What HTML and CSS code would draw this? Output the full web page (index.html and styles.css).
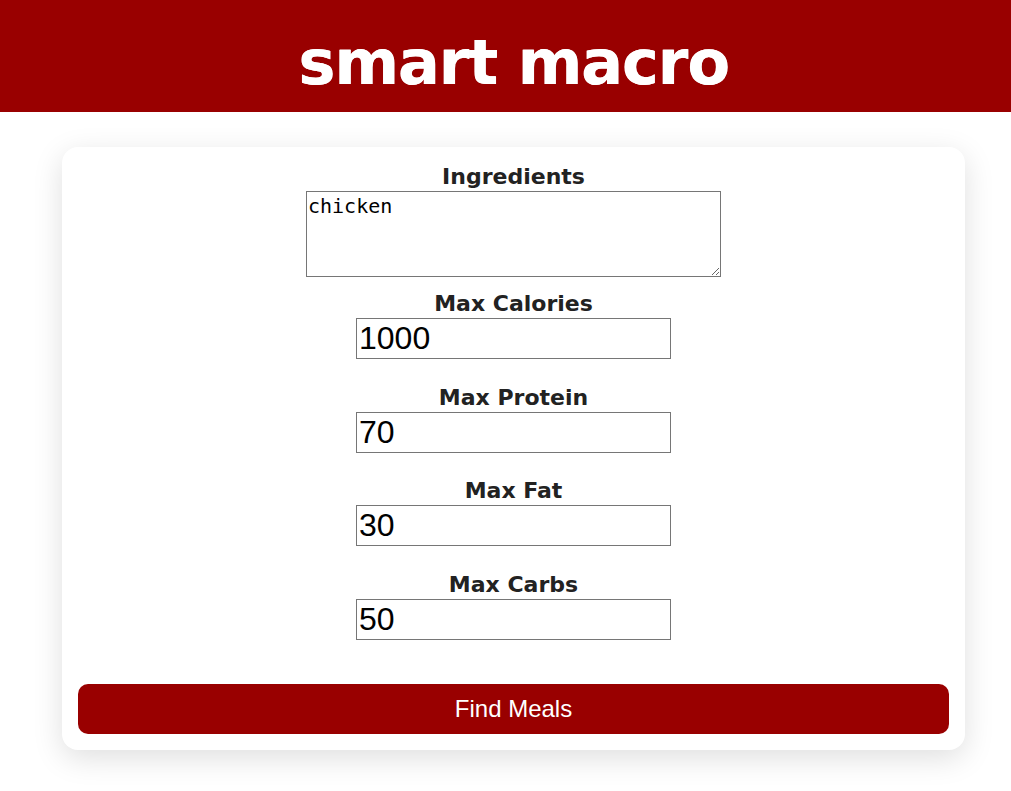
FILE: index.html
```html
<!DOCTYPE html>
<html>
	<head>
		<meta charset="utf-8" />
		<title>smart macro</title>
		<link rel="stylesheet" href="styles.css">
	</head>
	<body>
		<header class="top">
			<h1 class="logo">smart macro</h1>
		</header>
		<main class="page">
			<form class="card">
				<label class="field-label" for="ingredients">Ingredients</label>
				<textarea id="ingredients" class="ingredients">chicken</textarea>

				<label class="field-label" for="cal">Max Calories</label>
				<input id="cal" class="num" type="text" value="1000">

				<label class="field-label" for="protein">Max Protein</label>
				<input id="protein" class="num" type="text" value="70">

				<label class="field-label" for="fat">Max Fat</label>
				<input id="fat" class="num" type="text" value="30">

				<label class="field-label" for="carbs">Max Carbs</label>
				<input id="carbs" class="num" type="text" value="50">

				<button class="find" type="button">Find Meals</button>
			</form>
		</main>
	</body>
</html>
```

FILE: styles.css
```css
body{
	margin: 0;
	background: #fff;
	font-family: "DejaVu Sans", "Noto Sans", sans-serif;
	color: #222;
}
.top{
	background: #990000;
	height: 112px;
	padding-left: 16px;
	display: flex;
	align-items: center;
	justify-content: center;
}
.logo{
	margin: 0;
	color: #fff;
	font-size: 62px;
	font-weight: bold;
	letter-spacing: -1px;
	line-height: 1;
	padding-top: 14px;
	text-shadow: 0.5px 0 0 #fff;
}
.page{
	padding: 35px 0 40px 16px;
}
.card{
	width: 903px;
	box-sizing: border-box;
	margin: 0 auto;
	background: #fff;
	border-radius: 16px;
	box-shadow: 0 8px 30px rgba(0,0,0,0.13);
	padding: 15px 16px 16px;
	display: flex;
	flex-direction: column;
	align-items: center;
}
.field-label{
	font-size: 22px;
	font-weight: bold;
	line-height: 29px;
	color: #222;
}
.ingredients{
	width: 415px;
	height: 86px;
	box-sizing: border-box;
	font-family: "DejaVu Sans Mono", monospace;
	font-size: 20px;
	border: 1px solid #767676;
	padding: 2px 1px;
	margin: 0 0 12px;
	resize: vertical;
}
.num{
	width: 315px;
	height: 41px;
	box-sizing: border-box;
	font-family: "Liberation Sans", Arial, sans-serif;
	font-size: 32px;
	border: 1px solid #767676;
	padding: 1px 2px;
	margin: 0 0 23.7px;
}
.num:last-of-type{
	margin-bottom: 44px;
}
.find{
	align-self: stretch;
	height: 50px;
	background: #990000;
	color: #fff;
	border: none;
	border-radius: 10px;
	font-family: "Liberation Sans", Arial, sans-serif;
	font-size: 24px;
}
```
